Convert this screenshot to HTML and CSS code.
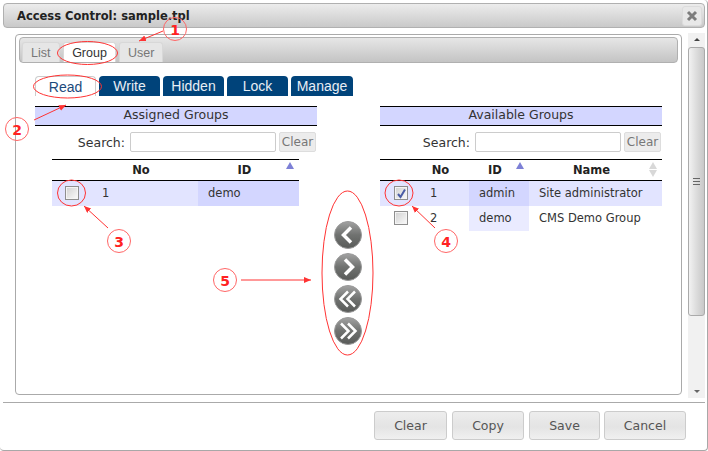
FILE: index.html
```html
<!DOCTYPE html>
<html lang="en">
<head>
<meta charset="utf-8">
<title>Access Control</title>
<link rel="stylesheet" href="styles.css">
</head>
<body>
<div class="dialog">
  <div class="titlebar">
    <span class="title">Access Control: sample.tpl</span>
    <span class="close"><svg width="12" height="12" viewBox="0 0 12 12"><path d="M2 2 L10 10 M10 2 L2 10" stroke="#7d7d7d" stroke-width="3"/></svg></span>
  </div>
  <div class="body">
    <div class="viewport">
      <div class="pane">
        <div class="tabbar">
          <span class="tab">List</span>
          <span class="tab active">Group</span>
          <span class="tab">User</span>
        </div>
        <div class="subtabs">
          <span class="subtab active">Read</span>
          <span class="subtab">Write</span>
          <span class="subtab">Hidden</span>
          <span class="subtab">Lock</span>
          <span class="subtab">Manage</span>
        </div>
        <div class="columns">
          <section class="group">
            <h3 class="group-title">Assigned Groups</h3>
            <div class="search"><label>Search:</label><input class="search-input" type="text"><span class="clear-btn">Clear</span></div>
            <table class="grid grid-left">
              <colgroup><col class="c-check"><col class="c-no-left"><col class="c-id-left"></colgroup>
              <thead><tr><th></th><th>No</th><th class="sorted">ID<span class="sort-up"></span></th></tr></thead>
              <tbody>
                <tr class="odd"><td><span class="check"></span></td><td>1</td><td class="sort-col">demo</td></tr>
              </tbody>
            </table>
          </section>
          <div class="movers">
            <svg class="mover" width="30" height="30" viewBox="0 0 30 30"><use href="#ball"/><path d="M18 7.500 L10.500 15 L18 22.500" class="chev"/></svg>
            <svg class="mover" width="30" height="30" viewBox="0 0 30 30"><use href="#ball"/><path d="M12 7.500 L19.500 15 L12 22.500" class="chev"/></svg>
            <svg class="mover" width="30" height="30" viewBox="0 0 30 30"><use href="#ball"/><path d="M15 7.500 L7.500 15 L15 22.500 M22 7.500 L14.500 15 L22 22.500" class="chev thin"/></svg>
            <svg class="mover" width="30" height="30" viewBox="0 0 30 30"><use href="#ball"/><path d="M8 7.500 L15.500 15 L8 22.500 M15 7.500 L22.500 15 L15 22.500" class="chev thin"/></svg>
          </div>
          <section class="group">
            <h3 class="group-title">Available Groups</h3>
            <div class="search"><label>Search:</label><input class="search-input" type="text"><span class="clear-btn">Clear</span></div>
            <table class="grid grid-right">
              <colgroup><col class="c-check"><col class="c-no-right"><col class="c-id-right"><col></colgroup>
              <thead><tr><th></th><th>No</th><th class="sorted">ID<span class="sort-up"></span></th><th class="sorted">Name<span class="sort-both"></span></th></tr></thead>
              <tbody>
                <tr class="odd"><td><span class="check checked"><svg width="11" height="11" viewBox="0 0 11 11"><path d="M2 6 L4.500 9 L9 1.500" fill="none" stroke="#4a5ca6" stroke-width="2"/></svg></span></td><td>1</td><td class="sort-col">admin</td><td>Site administrator</td></tr>
                <tr class="even"><td><span class="check"></span></td><td>2</td><td class="sort-col">demo</td><td>CMS Demo Group</td></tr>
              </tbody>
            </table>
          </section>
        </div>
      </div>
    </div>
    <div class="scrollbar">
      <span class="arrow-up"></span>
      <div class="thumb"><span class="grip"></span></div>
      <span class="arrow-down"></span>
    </div>
  </div>
  <div class="footer">
    <span class="btn btn-clear">Clear</span>
    <span class="btn btn-copy">Copy</span>
    <span class="btn btn-save">Save</span>
    <span class="btn btn-cancel">Cancel</span>
  </div>
</div>

<svg class="defs" width="0" height="0">
  <defs>
    <linearGradient id="ballfill" x1="0" y1="0" x2="0" y2="1">
      <stop offset="0" stop-color="#a2a2a2"/>
      <stop offset="0.5" stop-color="#707270"/>
      <stop offset="1" stop-color="#585a58"/>
    </linearGradient>
    <g id="ball">
      <circle cx="15" cy="15" r="13.500" fill="url(#ballfill)" stroke="#9a9a9a"/>
    </g>
    <marker id="head" markerWidth="8" markerHeight="8" refX="7" refY="3" orient="auto">
      <path d="M0 0 L7 3 L0 6 Z" fill="#f33"/>
    </marker>
  </defs>
</svg>

<svg class="notes" width="708" height="451" viewBox="0 0 708 451">
  <g class="note-shape">
    <ellipse cx="87.500" cy="53" rx="30" ry="11.500"/>
    <ellipse cx="67.500" cy="86.500" rx="34" ry="11.500"/>
    <ellipse cx="71.500" cy="193" rx="14" ry="13"/>
    <ellipse cx="399" cy="193" rx="14" ry="13"/>
    <ellipse cx="347.500" cy="273" rx="25.500" ry="82"/>
    <circle cx="175" cy="29" r="11.500"/>
    <circle cx="17" cy="129" r="11.500"/>
    <circle cx="119" cy="241" r="11.500"/>
    <circle cx="446" cy="241" r="11.500"/>
    <circle cx="225" cy="280" r="11.500"/>
    <path d="M163 31 L139 41" marker-end="url(#head)"/>
    <path d="M34 120 L66 105" marker-end="url(#head)"/>
    <path d="M108 228 L84 206" marker-end="url(#head)"/>
    <path d="M435 228 L412 206" marker-end="url(#head)"/>
    <path d="M241 280 L311 280" marker-end="url(#head)"/>
  </g>
  <g class="note-text">
    <text x="175" y="34.500">1</text>
    <text x="17" y="134.500">2</text>
    <text x="119" y="246.500">3</text>
    <text x="446" y="246.500">4</text>
    <text x="225" y="285.500">5</text>
  </g>
</svg>
</body>
</html>
```

FILE: styles.css
```css
* { box-sizing: border-box; }
html, body { margin: 0; padding: 0; background: #fff; overflow: hidden; }
body { width: 708px; height: 451px; font-family: "DejaVu Sans", Verdana, sans-serif; font-size: 12px; color: #333; position: relative; }

.dialog { height: 451px; padding: 3px 2px 0 3px; border-right: 1px solid #a8a8a8; border-bottom: 1px solid #a8a8a8; border-radius: 0 4px 4px 4px; }

.titlebar { height: 25px; display: flex; align-items: center; justify-content: space-between; padding: 0 2px 0 13px; border: 1px solid #b0b0b0; border-radius: 4px; background: linear-gradient(#ececec, #c9c9c9); }
.title { font-weight: bold; font-size: 11.500px; color: #222; }
.close { width: 20px; height: 20px; display: flex; align-items: center; justify-content: center; background: #e8e8e8; border: 1px solid #dcdcdc; border-radius: 3px; }

.body { display: flex; height: 373px; }
.viewport { width: 685px; padding: 6px 0 0 12px; }
.pane { width: 667px; height: 361px; border: 1px solid #aaa; border-radius: 4px; padding: 2px 3px; }

.scrollbar { width: 17px; height: 365px; margin-top: 5px; display: flex; flex-direction: column; align-items: center; background: #f1f1f1; }
.arrow-up, .arrow-down { flex: none; width: 0; height: 0; border-left: 3px solid transparent; border-right: 3px solid transparent; }
.arrow-up { border-bottom: 3px solid #444; margin: 5px 0 6px; }
.arrow-down { border-top: 3px solid #666; margin-top: auto; margin-bottom: 5px; }
.thumb { width: 17px; height: 269px; border: 1px solid #aaa; border-radius: 3px; background: linear-gradient(90deg, #f2f2f2, #dcdcdc 50%, #c8c8c8); display: flex; align-items: center; justify-content: center; }
.grip { width: 7px; height: 7px; border-top: 1px solid #666; border-bottom: 1px solid #666; background: linear-gradient(transparent 2px, #666 2px, #666 3px, transparent 3px); }

.tabbar { height: 26px; display: flex; align-items: flex-end; gap: 3px; padding-left: 2px; border: 1px solid #b0b0b0; border-radius: 4px; background: linear-gradient(#e6e6e6, #c4c4c4); }
.tab { height: 20px; padding: 0 8px; display: flex; align-items: center; border-radius: 3px 3px 0 0; background: #e6e6e6; border: 1px solid #d8d8d8; border-bottom: 0; font-family: "Liberation Sans", Arial, sans-serif; font-size: 12.500px; color: #777; }
.tab:first-child { width: 38px; }
.tab:nth-child(2) { width: 53px; justify-content: center; background: #fff; color: #333; }
.tab:nth-child(3) { width: 44px; }

.subtabs { display: flex; gap: 3px; margin: 13px 0 0 16px; }
.subtab { width: 61px; height: 20px; display: flex; align-items: center; justify-content: center; border-radius: 4px 4px 0 0; background: #00437a; color: #e8eef5; font-family: "Liberation Sans", Arial, sans-serif; font-size: 14px; }
.subtab.active { background: #fff; color: #1c4a7c; border: 1px solid #ccc; border-bottom: 0; }
.subtab:last-child { width: 62px; }

.columns { display: flex; margin: 10px 0 0 16px; }
.group { width: 282px; flex: none; }
.group-title { margin: 0; height: 20px; line-height: 16px; text-align: center; border-top: 1px solid #000; border-bottom: 1px solid #000; background: #d3d6ff; font-size: 12.500px; font-weight: normal; color: #333; }

.search { display: flex; align-items: center; justify-content: flex-end; height: 20px; margin-top: 6px; padding-right: 1px; }
.search label { margin-right: 5px; font-size: 12.500px; color: #333; }
.search-input { width: 146px; height: 20px; margin: 0 3px 0 0; border: 1px solid #ccc; border-radius: 2px; background: #fff; padding: 0; }
.clear-btn { width: 37px; height: 20px; display: flex; align-items: center; justify-content: center; background: #ececec; border: 1px solid #ddd; border-radius: 2px; font-size: 12px; color: #777; }

.grid { border-collapse: collapse; table-layout: fixed; margin-top: 7px; }
.grid-left { width: 247px; margin-left: 17px; }
.grid-right { width: 282px; }
.c-check { width: 40px; }
.c-no-left { width: 106px; }
.c-id-left { width: 101px; }
.c-no-right { width: 49px; }
.c-id-right { width: 60px; }
.grid th { position: relative; height: 21px; padding: 0 18px 0 10px; text-align: center; font-size: 11.500px; font-weight: bold; color: #222; border-top: 1px solid #000; border-bottom: 1px solid #000; }
.grid td { height: 25px; padding: 0 10px; font-size: 11.500px; color: #333; }
.grid td:first-child { padding: 0; }
.grid-left td:first-child { padding-left: 13px; }
.grid-right td:first-child { padding-left: 14px; }
.odd { background: #e2e4ff; }
.odd .sort-col { background: #d3d6ff; }
.even .sort-col { background: #eaebff; }
.grid-right .sort-col { background: #d3d6ff; }
.grid-right .even .sort-col { background: #eaebff; }

.sort-up { position: absolute; right: 5px; top: 2px; width: 0; height: 0; border-left: 4px solid transparent; border-right: 4px solid transparent; border-bottom: 7px solid #7d80d6; }
.sort-both { position: absolute; right: 5px; top: 2px; width: 8px; height: 15px; }
.sort-both::before, .sort-both::after { content: ""; position: absolute; left: 0; width: 0; height: 0; border-left: 4px solid transparent; border-right: 4px solid transparent; }
.sort-both::before { top: 0; border-bottom: 7px solid #d8d8d8; }
.sort-both::after { top: 8px; border-top: 7px solid #d8d8d8; }

.check { display: flex; align-items: center; justify-content: center; width: 14px; height: 14px; border: 1px solid #8e8e8e; background: linear-gradient(135deg, #d0d0d0, #fbfbfb); box-shadow: inset 0 0 0 1px #f4f4f4; }

.movers { flex: none; width: 63px; display: flex; flex-direction: column; align-items: center; gap: 2px; padding: 114px 1px 0 0; }
.mover { display: block; }
.chev { fill: none; stroke: #fff; stroke-width: 3.500; }
.chev.thin { stroke-width: 2.500; }

.footer { margin-top: 1px; height: 48px; padding: 8px 19px 0 0; border-top: 1px solid #aaa; display: flex; justify-content: flex-end; align-items: flex-start; gap: 5px; }
.btn { height: 29px; display: flex; align-items: center; justify-content: center; border: 1px solid #ccc; border-radius: 3px; background: linear-gradient(#ededed, #e4e4e4 55%, #f0f0f0); font-size: 12.500px; color: #555; }
.btn-clear { width: 73px; }
.btn-copy { width: 72px; }
.btn-save { width: 71px; margin-right: -1px; }
.btn-cancel { width: 82px; }

.defs { position: absolute; }
.notes { position: absolute; left: 0; top: 0; pointer-events: none; }
.note-shape { fill: none; stroke: #f33; stroke-width: 1; }
.note-shape circle { stroke: #f66; }
.note-text { fill: #f22; font-family: "DejaVu Sans", sans-serif; font-size: 14px; font-weight: bold; text-anchor: middle; }
```
